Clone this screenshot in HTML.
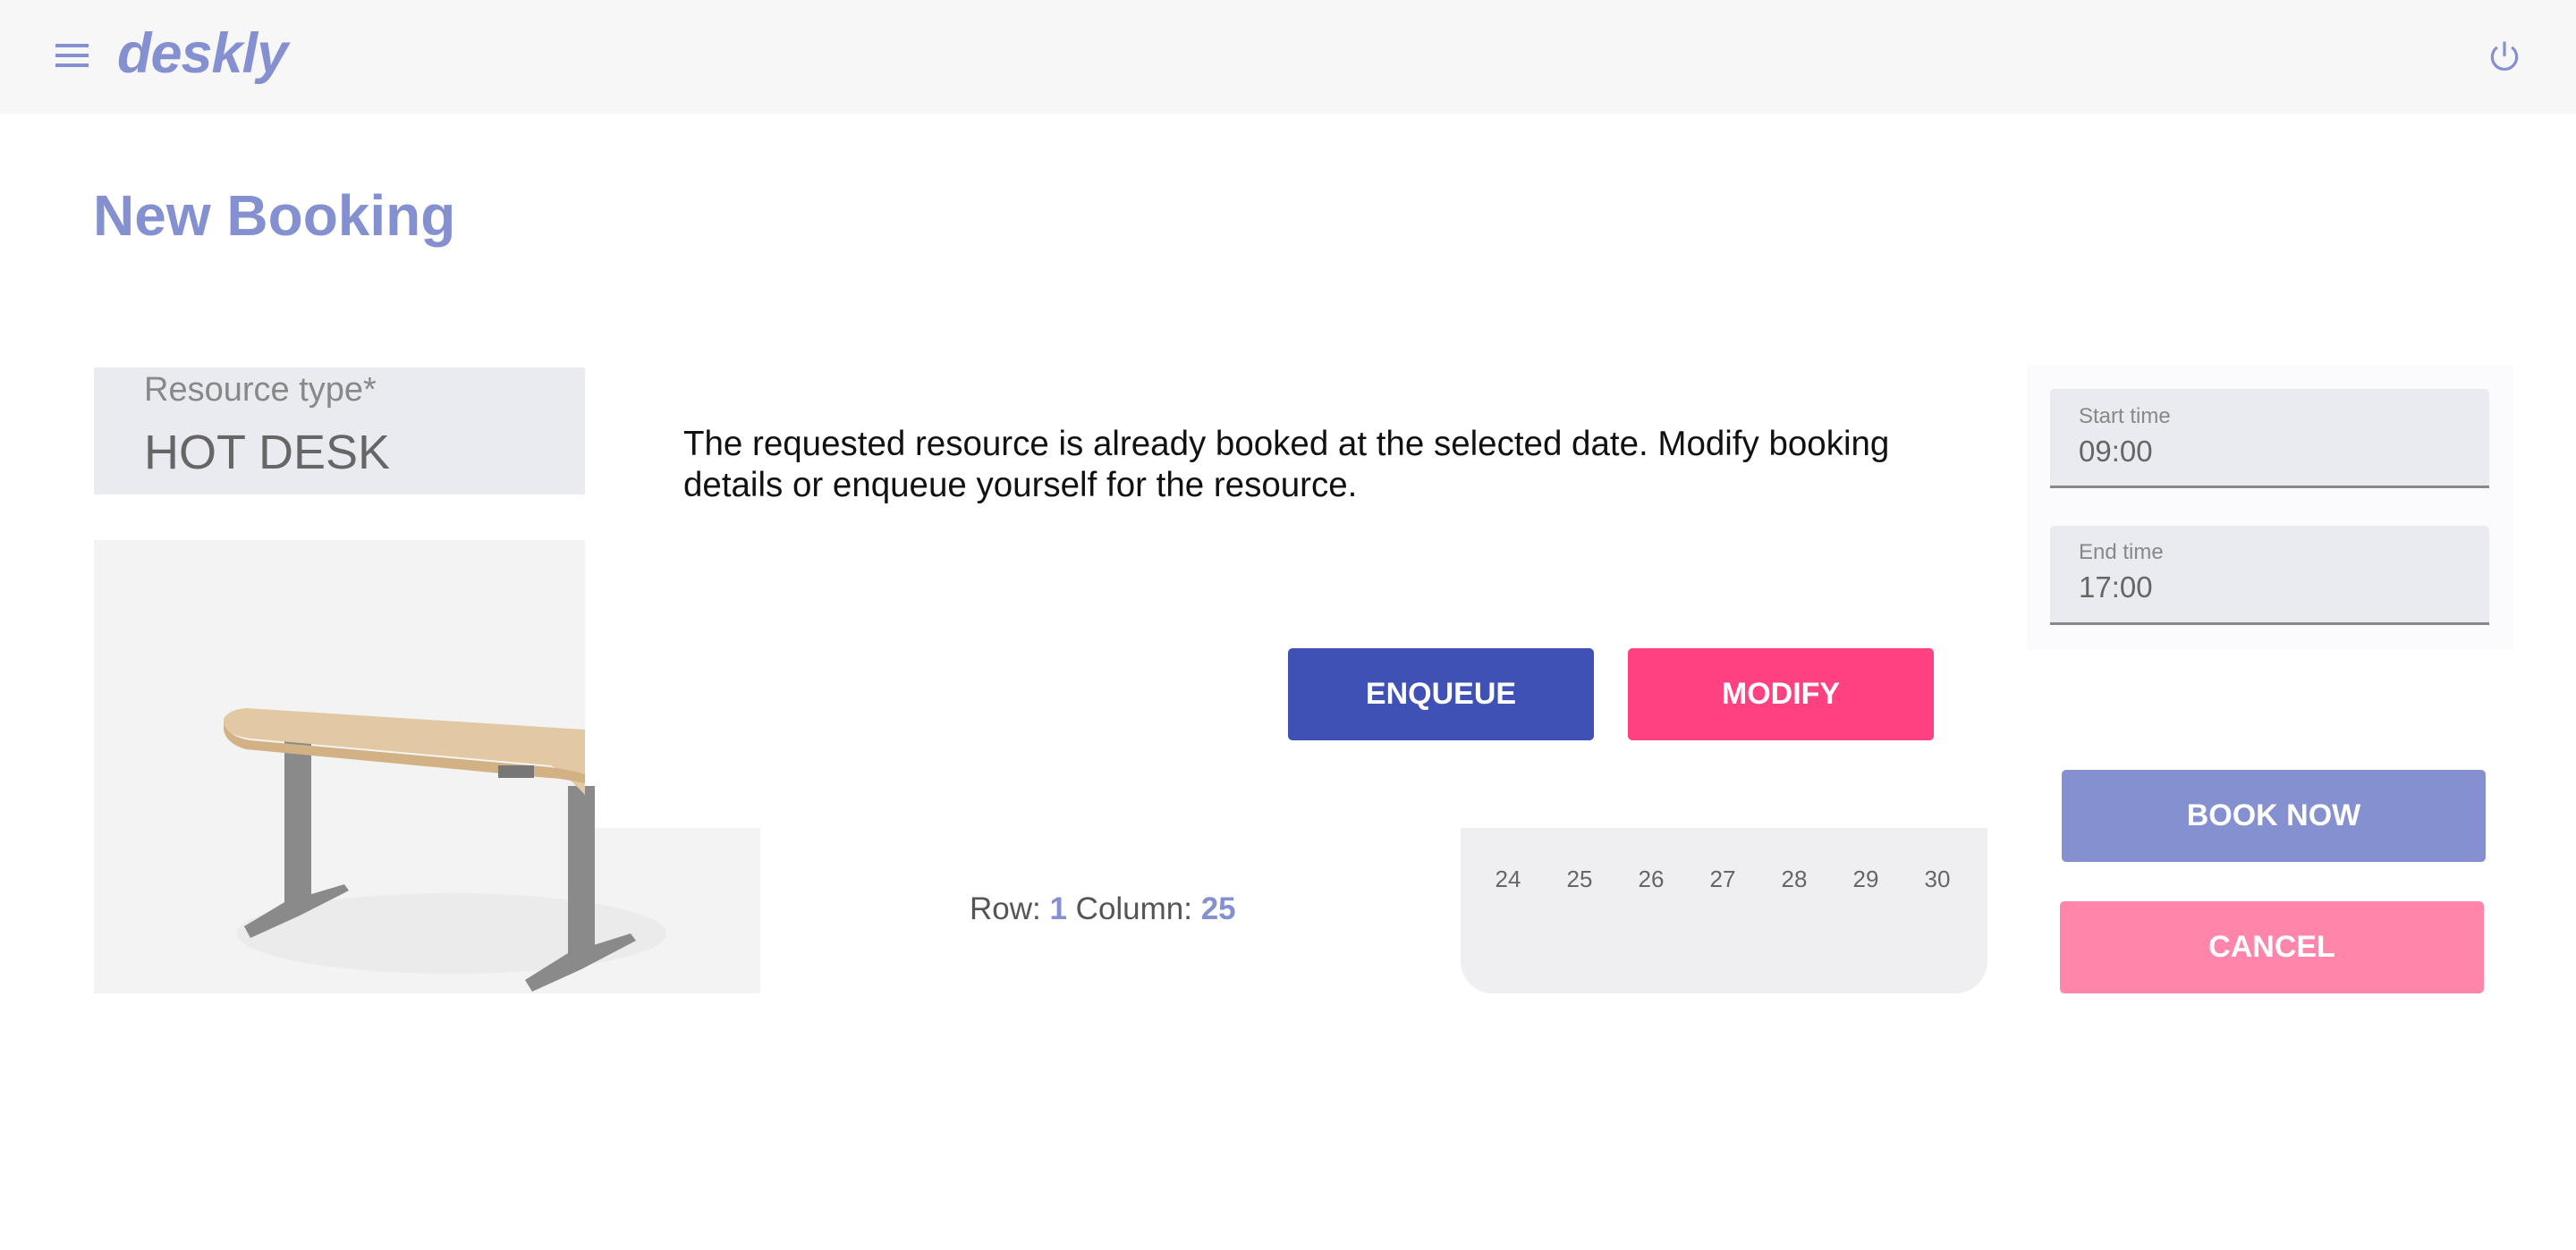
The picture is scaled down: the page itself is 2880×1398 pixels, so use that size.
<!DOCTYPE html>
<html><head><meta charset="utf-8"><style>
*{margin:0;padding:0;box-sizing:border-box}
body{width:2880px;height:1398px;background:#fff;font-family:"Liberation Sans",sans-serif;position:relative;overflow:hidden}
.a{position:absolute}
.btn{position:absolute;color:#fff;font-weight:bold;font-size:34px;display:flex;align-items:center;justify-content:center;border-radius:5px}
.num{position:absolute;top:968px;font-size:26px;color:#666;width:60px;text-align:center}
</style></head><body>
<div class="a" style="left:0;top:0;width:2880px;height:127px;background:#f7f7f7"></div>
<div class="a" style="left:62px;top:49px;width:37px;height:4px;background:#8590d0"></div>
<div class="a" style="left:62px;top:60px;width:37px;height:4px;background:#8590d0"></div>
<div class="a" style="left:62px;top:71px;width:37px;height:4px;background:#8590d0"></div>
<div class="a" style="left:131px;top:24px;font-size:63px;font-weight:bold;font-style:italic;color:#8590d0;letter-spacing:-1px">deskly</div>
<svg class="a" style="left:2780px;top:42px" width="40" height="40" viewBox="0 0 44 44"><path d="M13 12 A15 15 0 1 0 31 12" fill="none" stroke="#8590d0" stroke-width="3.5"/><line x1="22" y1="5" x2="22" y2="23" stroke="#8590d0" stroke-width="3.5"/></svg>
<div class="a" style="left:104px;top:204px;font-size:64px;font-weight:bold;color:#8590d0">New Booking</div>

<div class="a" style="left:105px;top:411px;width:549px;height:142px;background:#eaebf0"></div>
<div class="a" style="left:161px;top:415px;font-size:38px;color:#888">Resource type*</div>
<div class="a" style="left:161px;top:475px;font-size:54px;color:#666">HOT DESK</div>

<div class="a" style="left:105px;top:604px;width:549px;height:507px;background:#f3f3f3"></div>
<div class="a" style="left:654px;top:926px;width:196px;height:185px;background:#f3f3f3"></div>
<svg class="a" style="left:105px;top:604px" width="745" height="507" viewBox="0 0 745 507">
<ellipse cx="400" cy="440" rx="240" ry="45" fill="#ebebeb"/>
<rect x="213" y="222" width="30" height="190" fill="#8a8a8a"/>
<path d="M213 405 L280 385 L285 392 L230 420 L175 445 L168 432 Z" fill="#8a8a8a"/>
<rect x="530" y="275" width="30" height="195" fill="#8a8a8a"/>
<path d="M530 462 L600 440 L606 448 L545 480 L490 505 L482 492 Z" fill="#8a8a8a"/>
<path d="M145 200 Q150 190 170 188 L549 212 L549 285 Q520 255 510 252 L175 222 Q145 218 145 205 Z" fill="#e2c9a4"/>
<path d="M145 205 Q150 220 175 224 L510 254 Q540 258 549 262 L549 272 Q520 266 508 266 L170 234 Q148 228 145 212 Z" fill="#d2b285"/>
<rect x="452" y="252" width="40" height="14" fill="#777"/>
</svg>

<div class="a" style="left:764px;top:474px;width:1375px;font-size:38.5px;line-height:46px;color:#111">The requested resource is already booked at the selected date. Modify booking details or enqueue yourself for the resource.</div>

<div class="btn" style="left:1440px;top:725px;width:342px;height:103px;background:#3f51b5">ENQUEUE</div>
<div class="btn" style="left:1820px;top:725px;width:342px;height:103px;background:#ff4081">MODIFY</div>

<div class="a" style="left:2266px;top:408px;width:544px;height:319px;background:#fbfbfd"></div>
<div class="a" style="left:2292px;top:435px;width:491px;height:111px;background:#eaebf0;border-bottom:3px solid #888;border-radius:5px 5px 0 0"></div>
<div class="a" style="left:2324px;top:452px;font-size:24px;color:#888">Start time</div>
<div class="a" style="left:2324px;top:486px;font-size:33px;color:#666">09:00</div>
<div class="a" style="left:2292px;top:588px;width:491px;height:111px;background:#eaebf0;border-bottom:3px solid #888;border-radius:5px 5px 0 0"></div>
<div class="a" style="left:2324px;top:604px;font-size:24px;color:#888">End time</div>
<div class="a" style="left:2324px;top:638px;font-size:33px;color:#666">17:00</div>

<div class="btn" style="left:2305px;top:861px;width:474px;height:103px;background:#8490d0">BOOK NOW</div>
<div class="btn" style="left:2303px;top:1008px;width:474px;height:103px;background:#ff85ab">CANCEL</div>

<div class="a" style="left:1633px;top:926px;width:589px;height:185px;background:#efeff1;border-radius:0 0 36px 36px"></div>
<div class="num" style="left:1656px">24</div>
<div class="num" style="left:1736px">25</div>
<div class="num" style="left:1816px">26</div>
<div class="num" style="left:1896px">27</div>
<div class="num" style="left:1976px">28</div>
<div class="num" style="left:2056px">29</div>
<div class="num" style="left:2136px">30</div>

<div class="a" style="left:1084px;top:997px;font-size:35px;color:#555">Row: <b style="color:#8590d0">1</b> Column: <b style="color:#8590d0">25</b></div>
</body></html>
